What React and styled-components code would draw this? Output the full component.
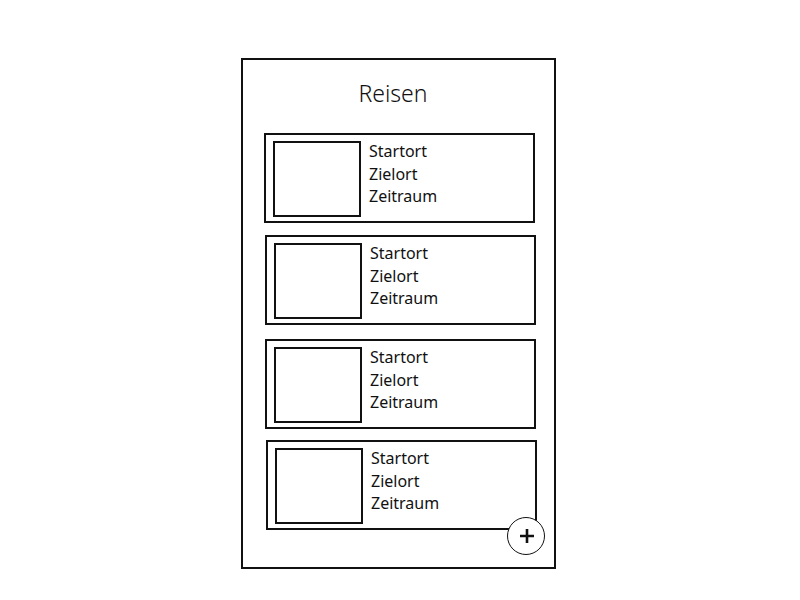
import styled, { createGlobalStyle } from "styled-components";

const GlobalStyle = createGlobalStyle`
  * { box-sizing: border-box; }
  body {
    margin: 0;
    background: #fff;
    font-family: "Noto Sans", "Open Sans", sans-serif;
    color: #111;
  }
`;

const Page = styled.div`
  width: 800px;
  height: 600px;
  padding: 58px 0 0 241px;
`;

const Phone = styled.div`
  position: relative;
  width: 315px;
  height: 511px;
  border: 2px solid #111;
  padding: 0 0 0 21px;
`;

const Title = styled.h1`
  margin: 0;
  padding: 18px 0 0 0;
  width: 258px;
  text-align: center;
  font-size: 23px;
  font-weight: 300;
  line-height: 30px;
  height: 73px;
`;

const List = styled.div`
  display: flex;
  flex-direction: column;
`;

const Card = styled.div`
  display: flex;
  width: 271px;
  height: 90px;
  border: 2px solid #111;
  padding: 6px 7px;
  margin-left: ${(p) => p.$dx}px;
  margin-top: ${(p) => p.$gap}px;
`;

const Thumb = styled.div`
  width: 88px;
  height: 76px;
  border: 2px solid #111;
  flex-shrink: 0;
`;

const Info = styled.div`
  margin-top: -1px;
  padding-left: 8px;
  font-size: 16px;
  line-height: 22.5px;
`;

const AddButton = styled.div`
  position: absolute;
  right: 9px;
  bottom: 12px;
  width: 38px;
  height: 38px;
  border-radius: 50%;
  border: 1px solid #111;
  background: #fff;
  display: flex;
  align-items: center;
  justify-content: center;
`;

const trips = [
  { dx: 0, gap: 0 },
  { dx: 1, gap: 12 },
  { dx: 1, gap: 14 },
  { dx: 2, gap: 11 },
];

export default function App() {
  return (
    <Page>
      <GlobalStyle />
      <Phone>
        <Title>Reisen</Title>
        <List>
          {trips.map((t, i) => (
            <Card key={i} $dx={t.dx} $gap={t.gap}>
              <Thumb />
              <Info>
                <div>Startort</div>
                <div>Zielort</div>
                <div>Zeitraum</div>
              </Info>
            </Card>
          ))}
        </List>
        <AddButton>
          <svg width="16" height="16" viewBox="0 0 16 16" style={{ marginLeft: 2 }}>
            <path d="M8 1v14M1 8h14" stroke="#111" strokeWidth="2.6" fill="none" />
          </svg>
        </AddButton>
      </Phone>
    </Page>
  );
}
